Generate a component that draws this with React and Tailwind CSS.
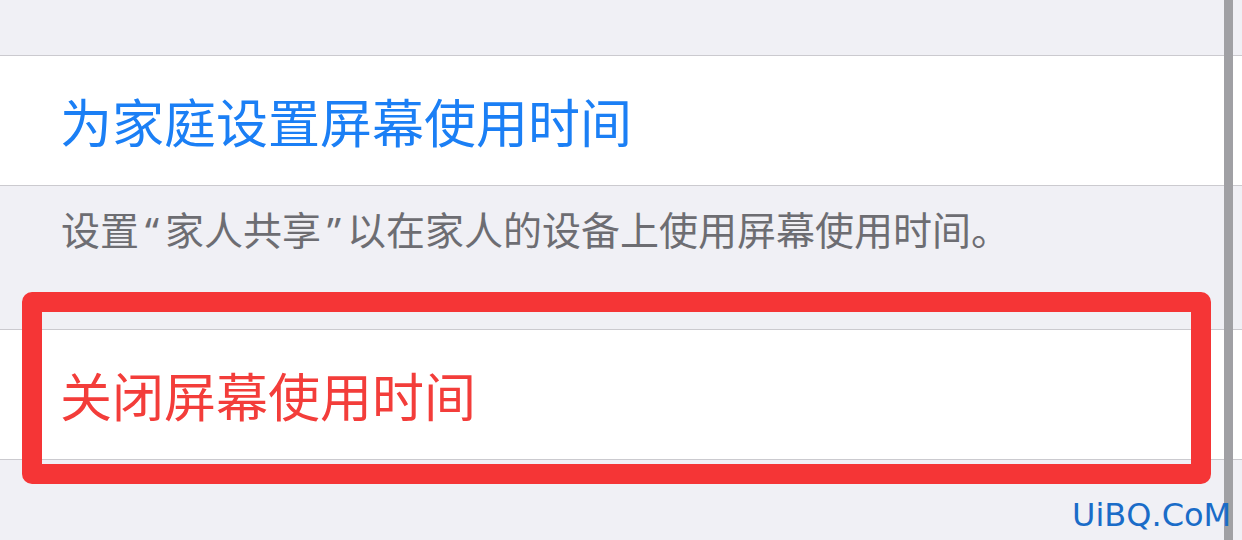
import React from "react";

const CJK = "font-['Noto_Sans_CJK_SC','Noto_Sans',sans-serif]";

// curly quotes take a proportional width in the reference
function Q({ children }) {
  return <span className="font-['Noto_Sans',sans-serif] px-[6px]">{children}</span>;
}

export default function App() {
  return (
    <div className={`relative w-[1242px] h-[540px] overflow-hidden bg-[#f0f0f5] ${CJK}`}>
      {/* list */}
      <div className="h-[55px]" />
      <div className="h-[131px] flex items-center pl-[60px] bg-white border-y border-[#cbcacf]">
        <span className="text-[52px] leading-none text-[#1b7ff5]">为家庭设置屏幕使用时间</span>
      </div>
      <div className="h-[143px] pl-[61px] pt-[22px]">
        <span className="text-[39px] leading-[40px] text-[#6d6d72]">
          设置<Q>“</Q>家人共享<Q>”</Q>以在家人的设备上使用屏幕使用时间。
        </span>
      </div>
      <div className="h-[131px] flex items-center pl-[60px] bg-white border-y border-[#cbcacf]">
        <span className="text-[52px] leading-none text-[#f33d3a]">关闭屏幕使用时间</span>
      </div>

      {/* red highlight box */}
      <div className="absolute left-[22px] top-[292px] w-[1189px] h-[192px] border-[20px] border-[#f53536] rounded-[10px]" />

      {/* scroll indicator */}
      <div className="absolute left-[1224px] top-0 w-[9px] h-full bg-[#a0a0a4]" />

      {/* watermark */}
      <div className="absolute left-[1072px] top-[496px] text-[32px] leading-[38px] text-[#1a6cc8] font-['DejaVu_Sans',sans-serif]">
        UiBQ.CoM
      </div>
    </div>
  );
}
